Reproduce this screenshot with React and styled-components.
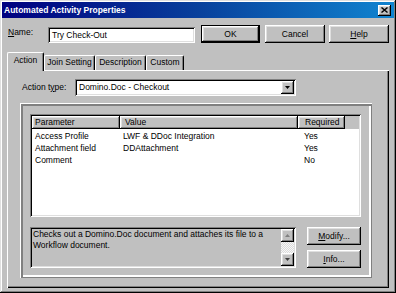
import React from "react"
import styled, { createGlobalStyle, css } from "styled-components"

const GlobalStyle = createGlobalStyle`
  html, body {
    margin: 0;
    padding: 0;
    background: #c0c0c0;
  }
  body {
    font-family: "Liberation Sans", Arial, sans-serif;
    font-size: 8.5px;
    color: #000;
  }
  * {
    box-sizing: border-box;
  }
`

const raised = css`
  box-shadow: inset -1px -1px #000, inset 1px 1px #fff, inset -2px -2px #808080,
    inset 2px 2px #dfdfdf;
`

const sunken = css`
  box-shadow: inset 1px 1px #808080, inset -1px -1px #fff, inset 2px 2px #000,
    inset -2px -2px #dfdfdf;
`

const Window = styled.div`
  width: 396px;
  height: 293px;
  padding: 2px;
  background: #c0c0c0;
  display: flex;
  flex-direction: column;
  box-shadow: inset -1px -1px #000, inset 1px 1px #dfdfdf, inset -2px -2px #808080,
    inset 2px 2px #fff;
`

const TitleBar = styled.div`
  flex: none;
  height: 16px;
  display: flex;
  align-items: center;
  justify-content: space-between;
  padding: 0 3px 0 2px;
  background: linear-gradient(to right, #000080 0%, #08409c 50%, #1084d0 100%);
  color: #fff;
  font-weight: bold;
  font-size: 8.5px;
`

const CloseButton = styled.div`
  width: 13px;
  height: 11px;
  background: #c0c0c0;
  display: flex;
  align-items: center;
  justify-content: center;
  ${raised}
`

const Body = styled.div`
  flex: 1;
  display: flex;
  flex-direction: column;
  padding: 7px 5px 4px 5px;
`

const NameRow = styled.div`
  display: flex;
  align-items: flex-start;
  height: 18px;
`

const Label = styled.label`
  width: ${(p) => p.$w}px;
  margin-left: ${(p) => p.$ml || 0}px;
  margin-top: ${(p) => p.$mt || 0}px;
  line-height: 13px;
`

const Key = styled.span`
  text-decoration: underline;
`

const TextInput = styled.div`
  width: 147px;
  height: 16px;
  margin-top: 2px;
  padding-left: 4px;
  line-height: 16px;
  background: #fff;
  ${sunken}
`

const Button = styled.div`
  width: ${(p) => p.$w}px;
  height: 18px;
  margin-left: ${(p) => p.$ml || 0}px;
  display: flex;
  align-items: center;
  justify-content: center;
  background: #c0c0c0;
  ${raised}
  ${(p) =>
    p.$default &&
    css`
      box-shadow: inset 0 0 0 1px #000, inset -2px -2px #000, inset 2px 2px #fff,
        inset -3px -3px #808080, inset 3px 3px #dfdfdf;
    `}
`

const TabStrip = styled.div`
  margin-top: 9px;
  height: 18px;
  display: flex;
  align-items: flex-end;
  position: relative;
  z-index: 1;
`

const Tab = styled.div`
  width: ${(p) => p.$w}px;
  height: ${(p) => (p.$active ? 19 : 15)}px;
  margin-bottom: ${(p) => (p.$active ? -1 : 0)}px;
  padding-top: ${(p) => (p.$active ? 2 : 1)}px;
  text-align: center;
  line-height: 11px;
  background: #c0c0c0;
  border-top: 1px solid #fff;
  border-left: 1px solid #fff;
  border-right: 1px solid #000;
  border-radius: 2px 2px 0 0;
  box-shadow: inset -1px 0 #808080;
`

const Panel = styled.div`
  flex: 1;
  display: flex;
  flex-direction: column;
  padding: 9px 17px 10px 13px;
  background: #c0c0c0;
  box-shadow: inset 1px 1px #fff, inset -1px -1px #000, inset -2px -2px #808080;
`

const ActionRow = styled.div`
  display: flex;
  align-items: center;
  height: 17px;
  padding-left: 2px;
`

const Combo = styled.div`
  width: 221px;
  height: 17px;
  padding: 2px;
  display: flex;
  background: #fff;
  ${sunken}
`

const ComboText = styled.div`
  flex: 1;
  padding-left: 2px;
  line-height: 13px;
`

const ArrowButton = styled.div`
  flex: none;
  width: 13px;
  height: 13px;
  display: flex;
  align-items: center;
  justify-content: center;
  background: #c0c0c0;
  ${raised}
`

const GroupBox = styled.div`
  flex: 1;
  margin-top: 7px;
  padding: 11px 11px 10px 10px;
  display: flex;
  flex-direction: column;
  box-shadow: inset 1px 1px #fff, inset -1px -1px #808080, inset 3px 3px #808080,
    inset -3px -3px #fff, inset 2px 2px #c0c0c0, inset -2px -2px #c0c0c0;
`

const ListView = styled.div`
  height: 103px;
  padding: 2px;
  display: flex;
  flex-direction: column;
  background: #fff;
  ${sunken}
`

const HeaderRow = styled.div`
  display: flex;
  height: 13px;
  flex: none;
  background: #c0c0c0;
`

const HeaderCell = styled.div`
  width: ${(p) => p.$w}px;
  padding-left: ${(p) => p.$pad || 0}px;
  line-height: 13px;
  ${raised}
`

const Rows = styled.div`
  padding-top: 1px;
`

const Row = styled.div`
  display: flex;
  height: 12px;
  line-height: 12px;
`

const Cell = styled.div`
  width: ${(p) => p.$w}px;
  padding-left: ${(p) => p.$pad}px;
  white-space: nowrap;
`

const BottomRow = styled.div`
  margin-top: 10px;
  height: 41px;
  display: flex;
`

const DescBox = styled.div`
  width: 266px;
  padding: 2px;
  display: flex;
  background: #c0c0c0;
  ${sunken}
`

const DescText = styled.div`
  flex: 1;
  padding: 0 1px;
  line-height: 11px;
`

const ScrollBar = styled.div`
  width: 13px;
  display: flex;
  flex-direction: column;
`

const Track = styled.div`
  flex: 1;
  background-color: #dfdfdf;
  background-image: linear-gradient(45deg, #fff 25%, transparent 25%, transparent 75%, #fff 75%),
    linear-gradient(45deg, #fff 25%, transparent 25%, transparent 75%, #fff 75%);
  background-size: 2px 2px;
  background-position: 0 0, 1px 1px;
  opacity: 0.9;
`

const SideButtons = styled.div`
  margin-left: 11px;
  display: flex;
  flex-direction: column;
  gap: 5px;
`

const Triangle = ({ up, color = "#000" }) => (
  <svg width="5" height="3" viewBox="0 0 5 3">
    <path d={up ? "M2.5 0 L5 3 L0 3 Z" : "M0 0 L5 0 L2.5 3 Z"} fill={color} />
  </svg>
)

const columns = [
  { key: "p", title: "Parameter", w: 88, headPad: 3, pad: 3 },
  { key: "v", title: "Value", w: 178, headPad: 5, pad: 3 },
  { key: "r", title: "Required", w: 47, headPad: 7, pad: 6 },
]

const params = [
  { p: "Access Profile", v: "LWF & DDoc Integration", r: "Yes" },
  { p: "Attachment field", v: "DDAttachment", r: "Yes" },
  { p: "Comment", v: "", r: "No" },
]

const tabs = [
  { label: "Action", w: 37, active: true },
  { label: "Join Setting", w: 51 },
  { label: "Description", w: 51 },
  { label: "Custom", w: 38 },
]

export default function App() {
  return (
    <>
      <GlobalStyle />
      <Window>
        <TitleBar>
          <span>Automated Activity Properties</span>
          <CloseButton>
            <svg width="7" height="6" viewBox="0 0 7 6">
              <path d="M0.5 0.5 L6.5 5.5 M6.5 0.5 L0.5 5.5" stroke="#000" strokeWidth="1.4" />
            </svg>
          </CloseButton>
        </TitleBar>
        <Body>
          <NameRow>
            <Label $w={40} $ml={1} $mt={1}>
              <Key>N</Key>ame:
            </Label>
            <TextInput>Try Check-Out</TextInput>
            <Button $w={59} $ml={6} $default>
              OK
            </Button>
            <Button $w={60} $ml={5}>
              Cancel
            </Button>
            <Button $w={60} $ml={4}>
              <Key>H</Key>elp
            </Button>
          </NameRow>

          <TabStrip>
            {tabs.map((t) => (
              <Tab key={t.label} $w={t.w} $active={t.active}>
                {t.label}
              </Tab>
            ))}
          </TabStrip>

          <Panel>
            <ActionRow>
              <Label $w={53}>
                Action t<Key>y</Key>pe:
              </Label>
              <Combo>
                <ComboText>Domino.Doc - Checkout</ComboText>
                <ArrowButton>
                  <Triangle />
                </ArrowButton>
              </Combo>
            </ActionRow>

            <GroupBox>
              <ListView>
                <HeaderRow>
                  {columns.map((c) => (
                    <HeaderCell key={c.key} $w={c.w} $pad={c.headPad}>
                      {c.title}
                    </HeaderCell>
                  ))}
                </HeaderRow>
                <Rows>
                  {params.map((row) => (
                    <Row key={row.p}>
                      {columns.map((c) => (
                        <Cell key={c.key} $w={c.w} $pad={c.pad}>
                          {row[c.key]}
                        </Cell>
                      ))}
                    </Row>
                  ))}
                </Rows>
              </ListView>

              <BottomRow>
                <DescBox>
                  <DescText>
                    Checks out a Domino.Doc document and attaches its file to a Workflow
                    document.
                  </DescText>
                  <ScrollBar>
                    <ArrowButton>
                      <Triangle up color="#808080" />
                    </ArrowButton>
                    <Track />
                    <ArrowButton>
                      <Triangle color="#404040" />
                    </ArrowButton>
                  </ScrollBar>
                </DescBox>
                <SideButtons>
                  <Button $w={54}>
                    <Key>M</Key>odify...
                  </Button>
                  <Button $w={54}>
                    <Key>I</Key>nfo...
                  </Button>
                </SideButtons>
              </BottomRow>
            </GroupBox>
          </Panel>
        </Body>
      </Window>
    </>
  )
}
